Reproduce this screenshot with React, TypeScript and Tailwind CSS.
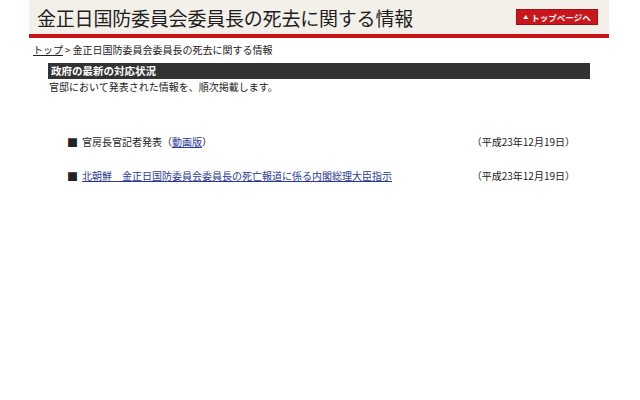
const jp = { fontFamily: '"Noto Sans CJK JP", "Noto Sans", sans-serif' }

const items = [
  { label: '官房長官記者発表（', link: '動画版', tail: '）', date: '（平成23年12月19日）' },
  { label: '', link: '北朝鮮　金正日国防委員会委員長の死亡報道に係る内閣総理大臣指示', tail: '', date: '（平成23年12月19日）' },
]

export default function App() {
  return (
    <div className="w-[640px] h-[400px] bg-white text-[#222]" style={jp}>
      {/* Header */}
      <div className="ml-[29px] w-[580px]">
        <div className="h-[34px] bg-[#f3f0e9] flex items-center justify-between pl-[8px] pr-[12px]">
          <h1 className="text-[19px] leading-none tracking-[-0.2px] text-[#1e1e1e] font-normal">
            金正日国防委員会委員長の死去に関する情報
          </h1>
          <a className="w-[80px] h-[14px] bg-[#c8161d] text-white text-[8.5px] leading-[14px] flex items-center justify-center gap-[3px] font-bold shadow-[0_0_0_1px_#a30f14]">
            <span className="text-[5px]">▲</span>トップページへ
          </a>
        </div>
        <div className="h-[4px] bg-[#cc1219]"></div>
      </div>

      {/* Breadcrumb */}
      <div className="pl-[33px] mt-[5px] text-[10px] leading-[14px] text-[#222]">
        <a className="underline text-[#222]">トップ</a>
        <span className="mx-[2px]">&gt;</span>
        金正日国防委員会委員長の死去に関する情報
      </div>

      {/* Section */}
      <div className="ml-[48px] w-[542px] mt-[6px]">
        <div className="h-[16px] bg-[#333333] text-white text-[10.5px] font-bold leading-[16px] pl-[3px]">
          政府の最新の対応状況
        </div>
        <p className="text-[10px] leading-[14px] mt-[1px] pl-[1px]">
          官邸において発表された情報を、順次掲載します。
        </p>
      </div>

      {/* List */}
      <ul className="ml-[67px] w-[508px] mt-[41px] flex flex-col gap-[20px]">
        {items.map((it, i) => (
          <li key={i} className="flex items-center justify-between text-[10px] leading-[14px]">
            <span className="flex items-center">
              <span className="text-[11px] mr-[4px]">■</span>
              {it.label}
              <a className="underline text-[#2a3a9c]">{it.link}</a>
              {it.tail}
            </span>
            <span>{it.date}</span>
          </li>
        ))}
      </ul>
    </div>
  )
}
